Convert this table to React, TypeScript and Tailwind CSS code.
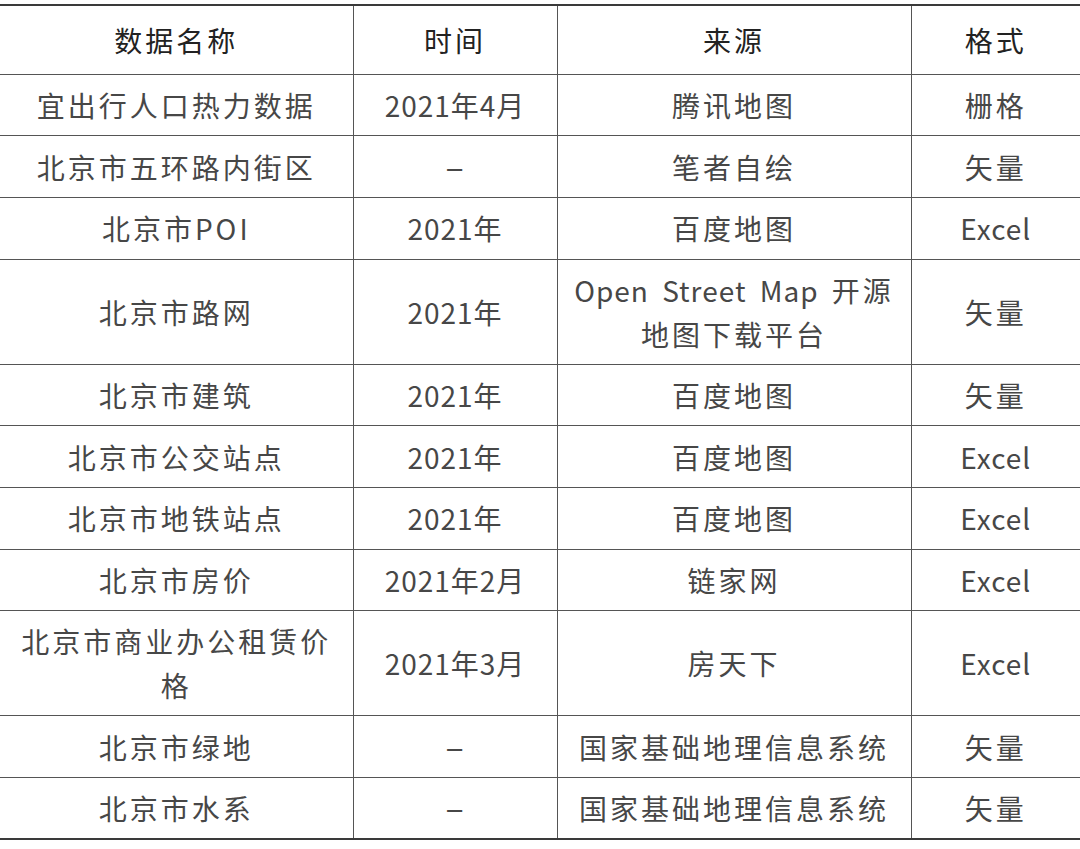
const rows: { name: React.ReactNode; time: string; source: React.ReactNode; format: string; tall?: boolean }[] = [
  { name: "宜出行人口热力数据", time: "2021年4月", source: "腾讯地图", format: "栅格" },
  { name: "北京市五环路内街区", time: "–", source: "笔者自绘", format: "矢量" },
  { name: "北京市POI", time: "2021年", source: "百度地图", format: "Excel" },
  {
    name: "北京市路网",
    time: "2021年",
    source: (
      <>
        <span className="whitespace-nowrap tracking-[1px] [word-spacing:6px]">
          Open Street Map <span className="tracking-[3px]">开源</span>
        </span>
        <br />
        地图下载平台
      </>
    ),
    format: "矢量",
    tall: true,
  },
  { name: "北京市建筑", time: "2021年", source: "百度地图", format: "矢量" },
  { name: "北京市公交站点", time: "2021年", source: "百度地图", format: "Excel" },
  { name: "北京市地铁站点", time: "2021年", source: "百度地图", format: "Excel" },
  { name: "北京市房价", time: "2021年2月", source: "链家网", format: "Excel" },
  {
    name: (
      <>
        北京市商业办公租赁价
        <br />
        格
      </>
    ),
    time: "2021年3月",
    source: "房天下",
    format: "Excel",
    tall: true,
  },
  { name: "北京市绿地", time: "–", source: "国家基础地理信息系统", format: "矢量" },
  { name: "北京市水系", time: "–", source: "国家基础地理信息系统", format: "矢量" },
];

export default function App() {
  return (
    <div className="h-[849px] w-[1080px] bg-white pt-[4px] font-['Noto_Sans_CJK_SC',sans-serif]">
      <table className="w-[1080px] table-fixed border-collapse border-y-[2px] border-[#3a3a3a]">
        <colgroup>
          <col className="w-[353px]" />
          <col className="w-[204px]" />
          <col className="w-[354px]" />
          <col className="w-[169px]" />
        </colgroup>
        <thead>
          <tr className="h-[69px] border-b border-[#555]">
            {["数据名称", "时间", "来源", "格式"].map((h, i) => (
              <th
                key={h}
                className={`p-0 text-center align-middle text-[28px] font-normal tracking-[3px] text-[#222] ${
                  i < 3 ? "border-r border-[#555]" : ""
                }`}
              >
                {h}
              </th>
            ))}
          </tr>
        </thead>
        <tbody>
          {rows.map((r, idx) => (
            <tr
              key={idx}
              className={`${r.tall ? "h-[105px]" : "h-[61.7px]"} ${
                idx < rows.length - 1 ? "border-b border-[#555]" : ""
              } text-[28px] leading-[44px] tracking-[3px] text-[#474747]`}
            >
              <td className="border-r border-[#555] px-2 py-0 text-center align-middle">{r.name}</td>
              <td className="border-r border-[#555] p-0 text-center align-middle tracking-[1px]">
                {r.time === "–" ? <span className="text-[34px]">–</span> : r.time}
              </td>
              <td className="border-r border-[#555] p-0 text-center align-middle">{r.source}</td>
              <td className="p-0 text-center align-middle">
                <span className={r.format === "Excel" ? "tracking-[1px]" : ""}>{r.format}</span>
              </td>
            </tr>
          ))}
        </tbody>
      </table>
    </div>
  );
}
